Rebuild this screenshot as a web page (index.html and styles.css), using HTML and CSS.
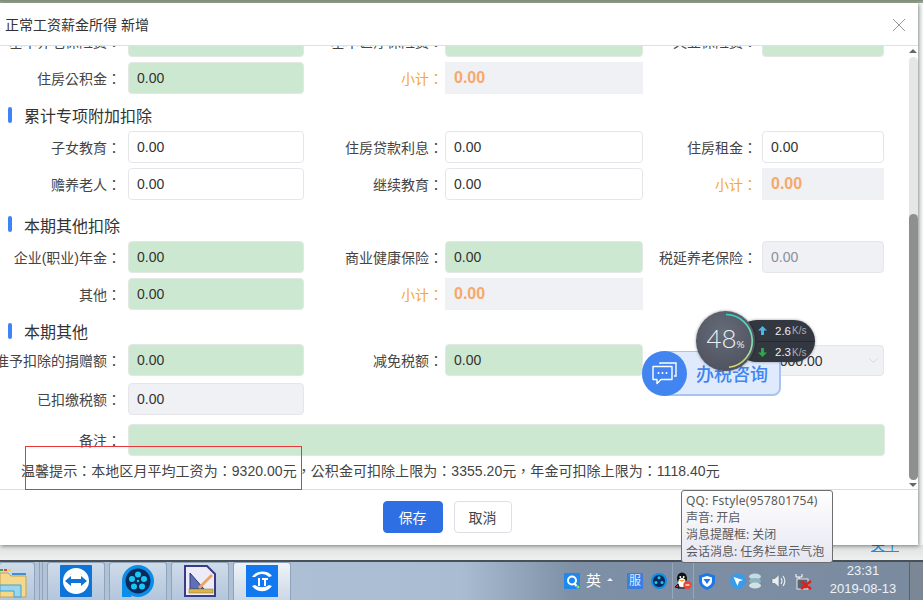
FILE: index.html
```html
<!DOCTYPE html>
<html>
<head>
<meta charset="utf-8">
<title>正常工资薪金所得 新增</title>
<link rel="stylesheet" href="styles.css">
</head>
<body>
<div class="page">
  <div class="topline"></div>
  <div class="modal">
    <header class="modal-head">
      <span class="modal-title">正常工资薪金所得 新增</span>
      <svg class="close" width="14" height="14" viewBox="0 0 14 14"><path d="M1 1l12 12M13 1L1 13" stroke="#9a9a9a" stroke-width="1" fill="none"/></svg>
    </header>
    <div class="modal-body">
      <div class="form">
        <div class="grid first">
          <label>基本养老保险费：</label><div class="field green"></div>
          <label>基本医疗保险费：</label><div class="field green"></div>
          <label>失业保险费：</label><div class="field green"></div>
          <label>住房公积金：</label><div class="field green">0.00</div>
          <label class="sum">小计：</label><div class="field total">0.00</div>
          <span></span><span></span>
        </div>
        <h3 class="section s1">累计专项附加扣除</h3>
        <div class="grid">
          <label>子女教育：</label><div class="field">0.00</div>
          <label>住房贷款利息：</label><div class="field">0.00</div>
          <label>住房租金：</label><div class="field">0.00</div>
          <label>赡养老人：</label><div class="field">0.00</div>
          <label>继续教育：</label><div class="field">0.00</div>
          <label class="sum">小计：</label><div class="field total">0.00</div>
        </div>
        <h3 class="section s2">本期其他扣除</h3>
        <div class="grid">
          <label>企业(职业)年金：</label><div class="field green">0.00</div>
          <label>商业健康保险：</label><div class="field green">0.00</div>
          <label>税延养老保险：</label><div class="field off mute">0.00</div>
          <label>其他：</label><div class="field green">0.00</div>
          <label class="sum">小计：</label><div class="field total">0.00</div>
          <span></span><span></span>
        </div>
        <h3 class="section s3">本期其他</h3>
        <div class="grid tight">
          <label>准予扣除的捐赠额：</label><div class="field green">0.00</div>
          <label>减免税额：</label><div class="field green">0.00</div>
          <label></label><div class="field off select">1000.00<svg width="9" height="6" viewBox="0 0 9 6"><path d="M.5.5l4 4 4-4" stroke="#d5d8de" fill="none"/></svg></div>
          <label>已扣缴税额：</label><div class="field off">0.00</div>
          <span></span><span></span><span></span><span></span>
          <label class="note-label">备注：</label><div class="field green note"></div>
        </div>
        <p class="tip">温馨提示：本地区月平均工资为：9320.00元，公积金可扣除上限为：3355.20元，年金可扣除上限为：1118.40元</p>
      </div>
      <div class="scrollbar">
        <i class="arrow up"></i>
        <div class="track"><div class="thumb"></div></div>
        <i class="arrow down"></i>
      </div>
    </div>
    <footer class="modal-foot">
      <button class="btn primary">保存</button>
      <button class="btn">取消</button>
    </footer>
  </div>
  <div class="strip"><a class="strip-link">关于</a></div>
  <div class="taskbar">
    <div class="task first-task">
      <svg width="28" height="30" viewBox="0 0 28 30"><path d="M0 5h8l3 3h15v21H0z" fill="#f2d98c" stroke="#c7a450"/><path d="M0 2h3" stroke="#3fa34a" stroke-width="2"/><path d="M4 2h3" stroke="#e0443a" stroke-width="2"/><path d="M8 2h3" stroke="#f0d040" stroke-width="2"/><path d="M12 6h14" stroke="#3f8fd8" stroke-width="2"/><path d="M0 17h21v12H14v-6H0z" fill="#9ad6ee" stroke="#4b9fc6"/></svg>
    </div>
    <i class="bar-sep"></i>
    <div class="task">
      <svg width="32" height="32" viewBox="0 0 32 32"><rect width="32" height="32" rx="1" fill="#0e74d8"/><circle cx="16" cy="16" r="13" fill="#fff"/><path d="M5 16l6-5v3h10v-3l6 5-6 5v-3H11v3z" fill="#0e74d8"/></svg>
    </div>
    <div class="task">
      <svg width="32" height="32" viewBox="0 0 32 32"><circle cx="16" cy="16" r="16" fill="#0a8fe8"/><path d="M0 16v16h10z" fill="#0a8fe8"/><circle cx="16" cy="16" r="12.500" fill="#0b2a5c"/><circle cx="16" cy="9.500" r="3" fill="#1cc6f2"/><circle cx="22" cy="14" r="3" fill="#1cc6f2"/><circle cx="20" cy="21.500" r="3" fill="#1cc6f2"/><circle cx="12" cy="21.500" r="3" fill="#1cc6f2"/><circle cx="10" cy="14" r="3" fill="#1cc6f2"/><circle cx="16" cy="16" r="1.200" fill="#1cc6f2"/></svg>
    </div>
    <div class="task">
      <svg width="32" height="32" viewBox="0 0 32 32"><path d="M1 1h22l8 8v22H1z" fill="#ecebf7" stroke="#3b3a86" stroke-width="2"/><path d="M6 8v16h14z" fill="#5f6fb8" stroke="#2d3a80"/><path d="M14 22L27 9l2 2-13 13z" fill="#eda45c"/><rect x="5" y="24" width="24" height="4" fill="#d9b64a" stroke="#8a6b20" stroke-width=".5"/></svg>
    </div>
    <div class="task active">
      <svg width="32" height="32" viewBox="0 0 32 32"><rect width="32" height="32" fill="#1178f0"/><path d="M6 12c4-7 16-7 20-1l-3 1c-4-4-10-4-14 0zM6 21c5 7 15 7 20 0l-3-1c-4 3-10 3-14 0z" fill="#fff"/><path d="M12 13h2v8h-2zM16 13h6v2h-2v6h-2v-6h-2z" fill="#fff"/></svg>
    </div>
    <div class="task-space"></div>
    <div class="tray">
      <svg width="16" height="16" viewBox="0 0 16 16"><rect width="16" height="16" rx="1" fill="#1e88f0"/><circle cx="8" cy="7.500" r="4" fill="none" stroke="#fff" stroke-width="2"/><path d="M10 10l2.500 3" stroke="#fff" stroke-width="2"/><circle cx="14" cy="14" r="1.500" fill="#9ce04a"/></svg>
      <span class="ime">英</span>
      <i class="ime-arrow"></i>
      <span class="fu">服</span>
      <svg class="t-film" width="16" height="16" viewBox="0 0 16 16"><circle cx="8" cy="8" r="8" fill="#0a8fe8"/><circle cx="8" cy="8" r="6" fill="#0b2a5c"/><circle cx="8" cy="4.800" r="1.500" fill="#1cc6f2"/><circle cx="11" cy="9.500" r="1.500" fill="#1cc6f2"/><circle cx="5" cy="9.500" r="1.500" fill="#1cc6f2"/></svg>
      <i class="tray-sep s-a"></i>
      <svg class="t-qq" width="17" height="18" viewBox="0 0 17 18"><ellipse cx="7" cy="6.500" rx="5" ry="6" fill="#111"/><ellipse cx="7" cy="10.500" rx="3.800" ry="4.500" fill="#fff"/><circle cx="5.300" cy="5" r="1" fill="#fff"/><circle cx="8.700" cy="5" r="1" fill="#fff"/><path d="M4 8h6l-3 2z" fill="#f4a21a"/><path d="M3 12l-3 3 4 1zM3 16h7" stroke="#111" fill="#d8262c"/><circle cx="12.500" cy="13" r="4.200" fill="#e14b3b"/><path d="M10.500 13h4" stroke="#fff" stroke-width="1.200"/></svg>
      <i class="tray-sep s-b"></i>
      <svg class="t-shield" width="16" height="17" viewBox="0 0 16 17"><path d="M8 0l8 2.500v6c0 4-4 7-8 8.500-4-1.500-8-4.500-8-8.500v-6z" fill="#1c78e8"/><path d="M8 3l5 1.500v4c0 2.500-2.500 4.500-5 5.500-2.500-1-5-3-5-5.500v-4z" fill="#fff"/><path d="M4.500 6h7l-3.500 5z" fill="#1c78e8"/></svg>
      <svg class="t-blue" width="16" height="16" viewBox="0 0 16 16"><circle cx="8" cy="8" r="8" fill="#3a9be8"/><path d="M3.500 4l9.500 3-4 1.500-1.500 4.500z" fill="#fff"/></svg>
      <svg class="t-stack" width="16" height="16" viewBox="0 0 16 16"><ellipse cx="8" cy="3.500" rx="6" ry="3" fill="#c3dbe2"/><ellipse cx="8" cy="8" rx="6" ry="3" fill="#8fb4c0"/><ellipse cx="8" cy="12.500" rx="6" ry="3" fill="#d3e2e6"/></svg>
      <svg class="t-vol" width="15" height="16" viewBox="0 0 15 16"><path d="M1 5.500h3l4-4v13l-4-4H1z" fill="#e9edf0" stroke="#66717f" stroke-width=".6"/><path d="M10 5c1.300 2 1.300 4 0 6M12 3c2.200 3 2.200 7 0 10" stroke="#e9edf0" fill="none" stroke-width="1.200"/></svg>
      <svg class="t-net" width="17" height="17" viewBox="0 0 17 17"><path d="M1 1v3h6V1M4 4v2" stroke="#fff" fill="none"/><rect x="2" y="6" width="11" height="10" fill="#5a6570" stroke="#e8e8e8"/><path d="M6 8l10 8M16 8L6 16" stroke="#e0201e" stroke-width="2.400"/></svg>
    </div>
    <div class="clock"><span>23:31</span><span>2019-08-13</span></div>
    <div class="show-desktop"></div>
  </div>

  <div class="redbox"></div>

  <div class="chat">
    <span class="chat-ico">
      <svg width="26" height="24" viewBox="0 0 26 24"><path d="M8 3V2h16v13h-2" fill="none" stroke="#fff" stroke-width="1.400"/><path d="M1 5.500h19v13H9l-4 4v-4H1z" fill="#4285f0" stroke="#fff" stroke-width="1.400" stroke-linejoin="round"/><circle cx="6.500" cy="12" r="1" fill="#fff"/><circle cx="10.500" cy="12" r="1" fill="#fff"/><circle cx="14.500" cy="12" r="1" fill="#fff"/></svg>
    </span>
    <span class="chat-text">办税咨询</span>
  </div>

  <div class="meter">
    <div class="meter-pill">
      <div class="rate">
        <svg width="9" height="9" viewBox="0 0 9 9"><path d="M4.500 0L9 4.500H6V9H3V4.500H0z" fill="#4fb4e8"/></svg>
        <b>2.6</b><em>K/s</em>
      </div>
      <div class="rate lower">
        <svg width="9" height="9" viewBox="0 0 9 9"><path d="M4.500 9L9 4.500H6V0H3v4.500H0z" fill="#2ea84a"/></svg>
        <b>2.3</b><em>K/s</em>
      </div>
    </div>
    <div class="meter-dial">
      <svg class="dial-ring" width="59" height="60" viewBox="0 0 59 60"><defs><linearGradient id="rg" x1="0" y1="0" x2="0" y2="1"><stop offset="0" stop-color="#35d6c6"/><stop offset=".6" stop-color="#8fe0a8"/><stop offset="1" stop-color="#d6d66a"/></linearGradient></defs><path d="M30 3.500A26.500 26.500 0 0 1 33 56.300" fill="none" stroke="url(#rg)" stroke-width="1.600"/></svg>
      <span class="pct">48<small>%</small></span>
    </div>
  </div>

  <div class="qq-tip">
    <div>QQ: Fstyle(957801754)</div>
    <div>声音: 开启</div>
    <div>消息提醒框: 关闭</div>
    <div>会话消息: 任务栏显示气泡</div>
  </div>
</div>
</body>
</html>
```
FILE: styles.css
```css
* { box-sizing: border-box; }
html, body { margin: 0; padding: 0; }
body { font-family: "Liberation Sans", "Noto Sans CJK TC", "Noto Sans CJK SC", sans-serif; color: #333; background: #fff; }
.page { position: relative; width: 923px; height: 600px; overflow: hidden; display: flex; flex-direction: column; background: #f7f8f8; }
.topline { height: 3px; background: linear-gradient(#7d8d76, #a3ad9c); flex: none; }
.modal { width: 918px; height: 542px; flex: none; background: #fff; display: flex; flex-direction: column; box-shadow: 1px 1px 4px rgba(0,0,0,.45); position: relative; }
.modal-head { height: 43px; flex: none; display: flex; align-items: center; justify-content: space-between; padding: 0 12px 0 5px; border-bottom: 1px solid #e0e0e0; }
.modal-title { font-size: 14px; color: #333; }
.close { margin-top: 1px; }
.modal-body { height: 443px; flex: none; display: flex; overflow: hidden; }
.form { width: 908px; flex: none; }
.grid { display: grid; grid-template-columns: 128px 176px 141px 198px 119px 122px; row-gap: 5px; }
.grid.first { margin-top: -21px; }
.grid.tight { row-gap: 7px; }
label { display: flex; justify-content: flex-end; font-size: 14px; line-height: 32px; height: 32px; padding: 1px 7px 0 0; color: #444; white-space: nowrap; }
label:nth-child(6n+3) { padding-right: 2px; }
label:nth-child(6n+5) { padding-right: 5px; }
label.sum { color: #f9a825; }
label.note-label { margin-top: 2px; }
.field { height: 32px; border: 1px solid #e4e6e9; border-radius: 4px; padding: 0 8px; font-size: 14px; line-height: 30px; color: #333; background: #fff; }
.field.green { background: #cde8d0; border-color: #e3e8e4; }
.field.off { background: #f0f1f5; border-color: #e4e6ea; }
.field.mute { color: #8a8f99; }
.field.total { background: #f0f1f5; border: 0; border-radius: 0; color: #f7a86a; font-weight: bold; padding-left: 9px; line-height: 31px; font-size: 16px; }
.field.select { display: flex; justify-content: space-between; align-items: center; height: 31px; margin-top: 1px; padding: 0 5px 0 9px; }
.field.note { grid-column: 2 / 7; width: 757px; margin-top: 2px; }
.section { margin: 0; font-weight: normal; font-size: 16px; color: #333; display: flex; align-items: center; position: relative; padding-left: 24px; line-height: 20px; }
.section::before { content: ""; position: absolute; left: 8px; width: 4px; height: 16px; border-radius: 2px; background: #3f83f8; margin-top: -5px; }
.section.s1 { height: 37px; padding-top: 9px; }
.section.s2 { height: 41px; padding-top: 12px; }
.section.s3 { height: 34px; padding-top: 12px; }
.tip { margin: 5px 0 0 21px; font-size: 14px; line-height: 20px; color: #444; white-space: nowrap; letter-spacing: .05px; }
.scrollbar { width: 10px; flex: none; display: flex; flex-direction: column; align-items: center; }
.arrow { width: 0; height: 0; border-left: 4px solid transparent; border-right: 4px solid transparent; flex: none; }
.arrow.up { border-bottom: 4px solid #666; margin: 3px 0 4px; }
.arrow.down { border-top: 4px solid #666; margin: 3px 0 2px; }
.track { flex: 1; width: 9px; background: #e6e6e6; border-radius: 5px; padding-top: 157px; }
.thumb { height: 100%; background: #8f8f8f; border-radius: 5px; }
.modal-foot { height: 56px; flex: none; border-top: 1px solid #dcdcdc; display: flex; justify-content: center; gap: 11px; padding: 11px 24px 0 0; }
.btn { width: 58px; height: 32px; padding: 0; border: 1px solid #dcdfe6; border-radius: 4px; background: #fff; color: #444; font: 14px "Liberation Sans", "Noto Sans CJK TC", sans-serif; }
.btn.primary { width: 60px; background: #2f6fe4; border-color: #2f6fe4; color: #fff; }
.strip { height: 15px; flex: none; overflow: hidden; display: flex; justify-content: flex-end; padding-right: 24px; background: linear-gradient(#dfe1e1, #eef0f0); }
.strip-link { font-size: 14px; line-height: 20px; margin-top: -10px; color: #1d8fd6; text-decoration: underline; }
.taskbar { height: 40px; flex: none; display: flex; align-items: flex-start; background: linear-gradient(90deg, #b3c4d8 0, #a9bcd2 50%, #7e90a6 62%, #7a8ba0 100%); border-top: 2px solid #4a5058; padding-top: 0; }
.task { width: 58px; height: 38px; margin-right: 4px; border: 1px solid #8fa3ba; border-bottom: 0; border-radius: 3px 3px 0 0; background: linear-gradient(#cfdbe9, #b3c6dc); display: flex; justify-content: center; padding-top: 2px; flex: none; }
.first-task { width: 36px; margin: 0 0 0 -1px; justify-content: flex-start; padding-top: 5px; overflow: hidden; }
.bar-sep { width: 4px; height: 38px; margin: 0 4px; flex: none; border-left: 1px solid #8fa3ba; border-right: 1px solid #8fa3ba; }
.task.active { background: linear-gradient(#eef3f8, #cbd8e6); }
.task-space { flex: 1; }
.tray { display: flex; align-items: center; height: 38px; flex: none; margin-right: 16px; }
.ime { color: #fff; font-size: 15px; width: 16px; margin-left: 6px; line-height: 20px; }
.ime-arrow { width: 0; height: 0; border-left: 3px solid transparent; border-right: 3px solid transparent; border-bottom: 3px solid #eef; margin: 0 14px 3px 5px; }
.fu { width: 16px; height: 16px; background: #3b7ee0; color: #dfe9ff; font-size: 12px; line-height: 16px; text-align: center; }
.t-film { margin-left: 8px; }
.tray-sep { width: 1px; height: 36px; background: rgba(255,255,255,.22); flex: none; }
.s-a { margin-left: 5px; }
.t-qq { margin-left: 2px; }
.s-b { margin-left: 1px; }
.t-shield { margin-left: 5px; }
.t-blue { margin-left: 15px; }
.t-stack { margin-left: 1px; }
.t-vol { margin-left: 8px; }
.t-net { margin-left: 9px; }
.clock { width: 70px; margin-right: 11px; flex: none; display: flex; flex-direction: column; align-items: center; font-size: 13px; line-height: 18px; color: #eef2f6; }
.show-desktop { width: 14px; height: 38px; flex: none; border-left: 1px solid #59636e; background: #7b8794; }
.redbox { position: absolute; left: 25px; top: 446px; width: 277px; height: 44px; border: 1px solid #e8373a; }
.chat { position: absolute; left: 642px; top: 351px; width: 139px; height: 45px; display: flex; align-items: center; background: #dfeafc; border: 1px solid #a9c3ef; border-bottom-width: 2px; border-right-width: 2px; border-radius: 22px 8px 8px 22px; }
.chat-ico { width: 45px; height: 45px; margin: -1px 0 -1px -1px; border-radius: 50%; background: #4285f0; display: flex; align-items: center; justify-content: center; flex: none; }
.chat-text { font-size: 18px; font-weight: 500; color: #4285f0; margin-left: 9px; white-space: nowrap; }
.meter { position: absolute; left: 696px; top: 311px; width: 120px; height: 60px; }
.meter-pill { position: absolute; left: 40px; top: 9px; width: 79px; height: 42px; background: #33373f; border-radius: 21px; box-shadow: 0 0 3px rgba(0,0,0,.4); color: #fff; padding-left: 21px; }
.rate { height: 21px; display: flex; align-items: center; font-size: 11.500px; }
.rate.lower { border-top: 1px solid #262a30; }
.rate svg { margin: 0 8px 0 1px; flex: none; }
.rate b { font-weight: normal; color: #eef0f2; }
.rate em { font-style: normal; font-size: 10px; color: #a8adb5; margin-left: 1px; }
.meter-dial { position: absolute; left: 0; top: 0; width: 59px; height: 60px; border-radius: 50%; background: radial-gradient(circle at 45% 35%, #666b78, #484c58); box-shadow: 0 0 3px rgba(0,0,0,.4); display: flex; align-items: center; justify-content: center; }
.dial-ring { position: absolute; left: 0; top: 0; }
.pct { font-size: 26px; line-height: 30px; color: #eceef2; font-family: "Lato", sans-serif; font-weight: 300; position: relative; }
.pct small { font-size: 10px; font-weight: 400; }
.qq-tip { position: absolute; left: 681px; top: 490px; width: 152px; height: 73px; padding: 1px 4px; border: 1px solid #6e6e6e; border-radius: 3px; background: linear-gradient(#fff, #e6e6f2); font-family: "Noto Sans", "Noto Sans CJK TC", sans-serif; font-size: 12px; line-height: 17px; color: #5a5a5a; white-space: nowrap; }
.qq-tip div:first-child { letter-spacing: .25px; }
```
